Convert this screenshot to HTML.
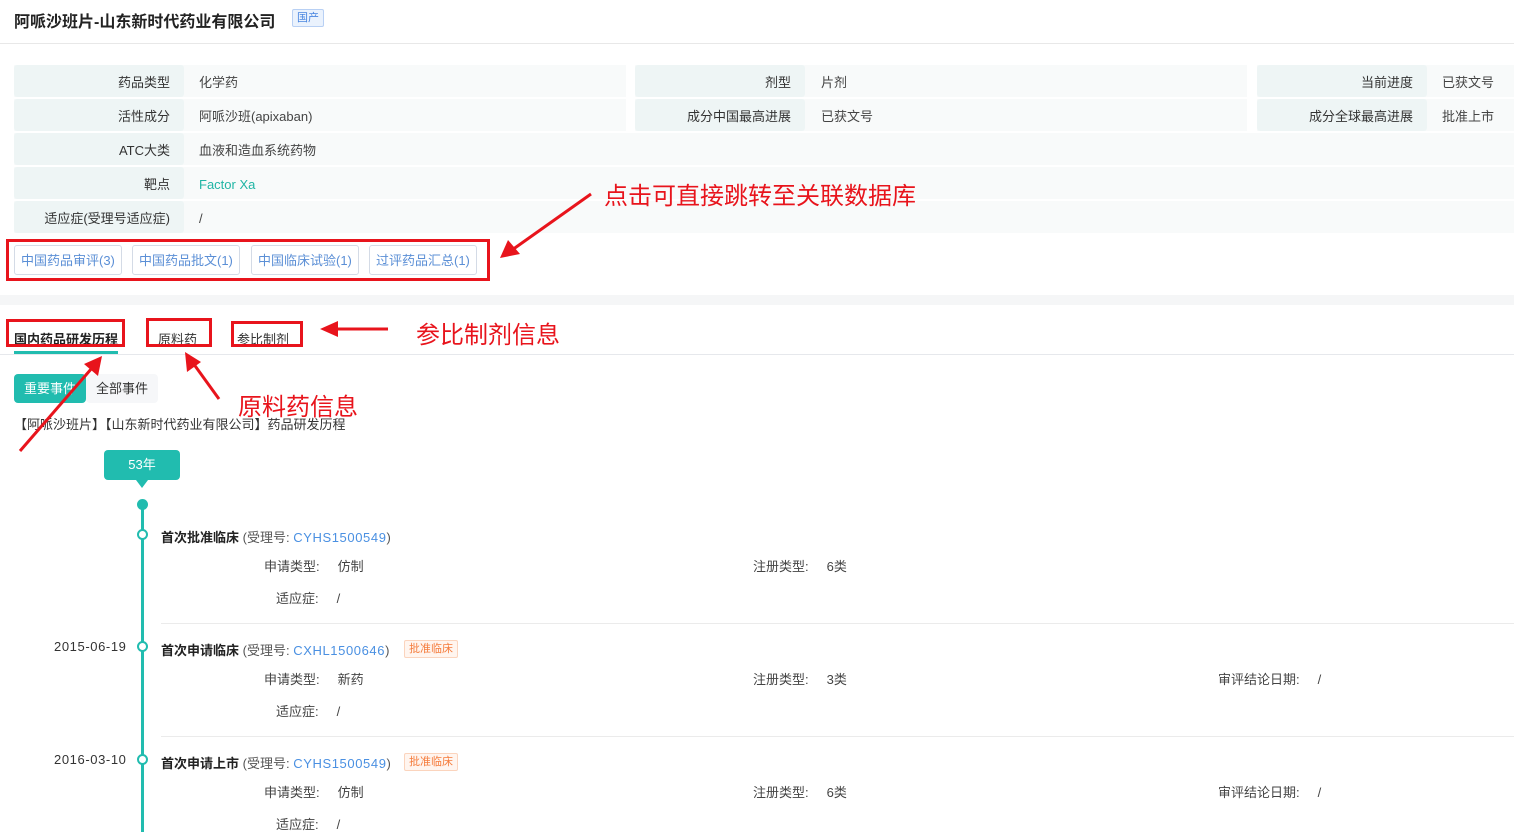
<!DOCTYPE html>
<html><head><meta charset="utf-8"><style>
*{margin:0;padding:0;box-sizing:border-box}
body{width:1514px;height:832px;overflow:hidden;background:#fff;font-family:"Liberation Sans","Noto Sans CJK SC",sans-serif;font-size:13px;color:#333;position:relative}
.a{position:absolute;white-space:nowrap}
.lb{position:absolute;background:#eef5f5;text-align:right;padding-right:14px;padding-top:2px;line-height:32px;height:32px;border-radius:3px;color:#333}
.vl{position:absolute;background:#f8fafa;line-height:32px;height:32px}
.btn{position:absolute;top:245px;height:30px;line-height:30px;border:1px solid #d4dbe6;border-radius:3px;color:#5b8fd6;padding:0 6px;font-size:13px}
.rb{position:absolute;border:3px solid #e8141c}
.red{position:absolute;color:#e8141c;white-space:nowrap}
.dot{position:absolute;left:137px;width:11px;height:11px;border:2px solid #21bcaf;border-radius:50%;background:#fff}
.k{position:absolute;color:#444;white-space:nowrap}
.tag{position:absolute;height:18px;line-height:16px;border:1px solid #fbd4bd;background:#fff5ef;color:#f57c3c;font-size:11px;padding:0 4px;border-radius:2px}
.hr{position:absolute;left:161px;right:0;height:1px;background:#ebebeb}
.v{position:absolute;line-height:32px;color:#444;padding-top:2px}
</style></head><body>
<div class="a" style="left:14px;top:8px;font-size:16px;font-weight:bold;color:#222">阿哌沙班片-山东新时代药业有限公司</div>
<div class="a" style="left:292px;top:9px;height:18px;line-height:16px;border:1px solid #b8d0f4;background:#eaf2fd;color:#4a86e0;font-size:11px;padding:0 4px;border-radius:2px">国产</div>
<div class="a" style="left:0;right:0;top:43px;height:1px;background:#e8e8e8"></div>

<div class="vl" style="left:14px;top:65px;width:1500px"></div>
<div class="vl" style="left:14px;top:99px;width:1500px"></div>
<div class="vl" style="left:14px;top:133px;width:1500px"></div>
<div class="vl" style="left:14px;top:167px;width:1500px"></div>
<div class="vl" style="left:14px;top:201px;width:1500px"></div>
<div class="a" style="left:626px;top:65px;width:9px;height:66px;background:#fff"></div>
<div class="a" style="left:1247px;top:65px;width:10px;height:66px;background:#fff"></div>
<div class="a" style="left:14px;top:97px;width:1500px;height:2px;background:#fff"></div>
<div class="a" style="left:14px;top:131px;width:1500px;height:2px;background:#fff"></div>
<div class="a" style="left:14px;top:165px;width:1500px;height:2px;background:#fff"></div>
<div class="a" style="left:14px;top:199px;width:1500px;height:2px;background:#fff"></div>

<div class="lb" style="left:14px;top:65px;width:170px">药品类型</div>
<div class="lb" style="left:14px;top:99px;width:170px">活性成分</div>
<div class="lb" style="left:14px;top:133px;width:170px">ATC大类</div>
<div class="lb" style="left:14px;top:167px;width:170px">靶点</div>
<div class="lb" style="left:14px;top:201px;width:170px">适应症(受理号适应症)</div>
<div class="v" style="left:199px;top:65px">化学药</div>
<div class="v" style="left:199px;top:99px">阿哌沙班(apixaban)</div>
<div class="v" style="left:199px;top:133px">血液和造血系统药物</div>
<div class="v" style="left:199px;top:167px;color:#21b5a5">Factor Xa</div>
<div class="v" style="left:199px;top:201px">/</div>

<div class="lb" style="left:635px;top:65px;width:170px">剂型</div>
<div class="lb" style="left:635px;top:99px;width:170px">成分中国最高进展</div>
<div class="v" style="left:821px;top:65px">片剂</div>
<div class="v" style="left:821px;top:99px">已获文号</div>
<div class="lb" style="left:1257px;top:65px;width:170px">当前进度</div>
<div class="lb" style="left:1257px;top:99px;width:170px">成分全球最高进展</div>
<div class="v" style="left:1442px;top:65px">已获文号</div>
<div class="v" style="left:1442px;top:99px">批准上市</div>

<div class="btn" style="left:14px">中国药品审评(3)</div>
<div class="btn" style="left:132px">中国药品批文(1)</div>
<div class="btn" style="left:251px">中国临床试验(1)</div>
<div class="btn" style="left:369px">过评药品汇总(1)</div>
<div class="rb" style="left:6px;top:239px;width:484px;height:42px"></div>
<div class="red" style="left:604px;top:176px;font-size:24px">点击可直接跳转至关联数据库</div>

<div class="a" style="left:0;right:0;top:295px;height:10px;background:#f5f6f7"></div>

<div class="a" style="left:14px;top:329px;font-weight:bold;color:#222">国内药品研发历程</div>
<div class="a" style="left:14px;top:351px;width:104px;height:3px;background:#21bcaf"></div>
<div class="a" style="left:158px;top:329px;color:#333">原料药</div>
<div class="a" style="left:237px;top:329px;color:#333">参比制剂</div>
<div class="a" style="left:0;right:0;top:354px;height:1px;background:#e6e8ec"></div>
<div class="rb" style="left:6px;top:319px;width:119px;height:28px"></div>
<div class="rb" style="left:146px;top:318px;width:66px;height:29px"></div>
<div class="rb" style="left:231px;top:321px;width:72px;height:26px"></div>
<div class="red" style="left:416px;top:315px;font-size:24px">参比制剂信息</div>
<div class="red" style="left:238px;top:387px;font-size:24px">原料药信息</div>

<div class="a" style="left:14px;top:374px;width:72px;height:29px;line-height:29px;text-align:center;background:#21bcaf;color:#fff;border-radius:4px">重要事件</div>
<div class="a" style="left:86px;top:374px;width:72px;height:29px;line-height:29px;text-align:center;background:#f6f7f9;color:#333;border-radius:4px">全部事件</div>
<div class="a" style="left:14px;top:414px;color:#333">【阿哌沙班片】【山东新时代药业有限公司】药品研发历程</div>

<div class="a" style="left:104px;top:450px;width:76px;height:30px;line-height:30px;text-align:center;background:#21bcaf;color:#fff;border-radius:4px">53年</div>
<div class="a" style="left:136px;top:480px;width:0;height:0;border-left:6px solid transparent;border-right:6px solid transparent;border-top:8px solid #21bcaf"></div>
<div class="a" style="left:141px;top:505px;width:3px;height:327px;background:#21bcaf"></div>
<div class="a" style="left:137px;top:499px;width:11px;height:11px;border-radius:50%;background:#21bcaf"></div>

<div class="dot" style="top:529px"></div>
<div class="a" style="left:161px;top:527px"><b style="color:#222">首次批准临床</b> <span style="color:#555">(受理号: </span><span style="color:#4a90e2;letter-spacing:0.6px">CYHS1500549</span><span style="color:#555">)</span></div>
<div class="k" style="left:264px;top:556px">申请类型: &nbsp;&nbsp;&nbsp;&nbsp;仿制</div>
<div class="k" style="left:276px;top:588px">适应症: &nbsp;&nbsp;&nbsp;&nbsp;/</div>
<div class="k" style="left:753px;top:556px">注册类型: &nbsp;&nbsp;&nbsp;&nbsp;6类</div>
<div class="hr" style="top:623px"></div>

<div class="a" style="left:54px;top:639px;color:#333;letter-spacing:0.6px">2015-06-19</div>
<div class="dot" style="top:641px"></div>
<div class="a" style="left:161px;top:640px"><b style="color:#222">首次申请临床</b> <span style="color:#555">(受理号: </span><span style="color:#4a90e2;letter-spacing:0.6px">CXHL1500646</span><span style="color:#555">)</span></div>
<div class="tag" style="left:404px;top:640px">批准临床</div>
<div class="k" style="left:264px;top:669px">申请类型: &nbsp;&nbsp;&nbsp;&nbsp;新药</div>
<div class="k" style="left:276px;top:701px">适应症: &nbsp;&nbsp;&nbsp;&nbsp;/</div>
<div class="k" style="left:753px;top:669px">注册类型: &nbsp;&nbsp;&nbsp;&nbsp;3类</div>
<div class="k" style="left:1218px;top:669px">审评结论日期: &nbsp;&nbsp;&nbsp;&nbsp;/</div>
<div class="hr" style="top:736px"></div>

<div class="a" style="left:54px;top:752px;color:#333;letter-spacing:0.6px">2016-03-10</div>
<div class="dot" style="top:754px"></div>
<div class="a" style="left:161px;top:753px"><b style="color:#222">首次申请上市</b> <span style="color:#555">(受理号: </span><span style="color:#4a90e2;letter-spacing:0.6px">CYHS1500549</span><span style="color:#555">)</span></div>
<div class="tag" style="left:404px;top:753px">批准临床</div>
<div class="k" style="left:264px;top:782px">申请类型: &nbsp;&nbsp;&nbsp;&nbsp;仿制</div>
<div class="k" style="left:276px;top:814px">适应症: &nbsp;&nbsp;&nbsp;&nbsp;/</div>
<div class="k" style="left:753px;top:782px">注册类型: &nbsp;&nbsp;&nbsp;&nbsp;6类</div>
<div class="k" style="left:1218px;top:782px">审评结论日期: &nbsp;&nbsp;&nbsp;&nbsp;/</div>

<svg class="a" style="left:0;top:0" width="1514" height="832">
<g stroke="#e8141c" stroke-width="3" fill="#e8141c">
<line x1="591" y1="194" x2="512" y2="250"/>
<polygon points="500,258 508,240 520,254" stroke="none"/>
<line x1="388" y1="329" x2="335" y2="329"/>
<polygon points="320,329 338,321 338,337" stroke="none"/>
<line x1="20" y1="451" x2="92" y2="368"/>
<polygon points="102,356 98,376 84,364" stroke="none"/>
<line x1="219" y1="399" x2="193" y2="363"/>
<polygon points="185,352 201,362 187,372" stroke="none"/>
</g></svg>
</body></html>
